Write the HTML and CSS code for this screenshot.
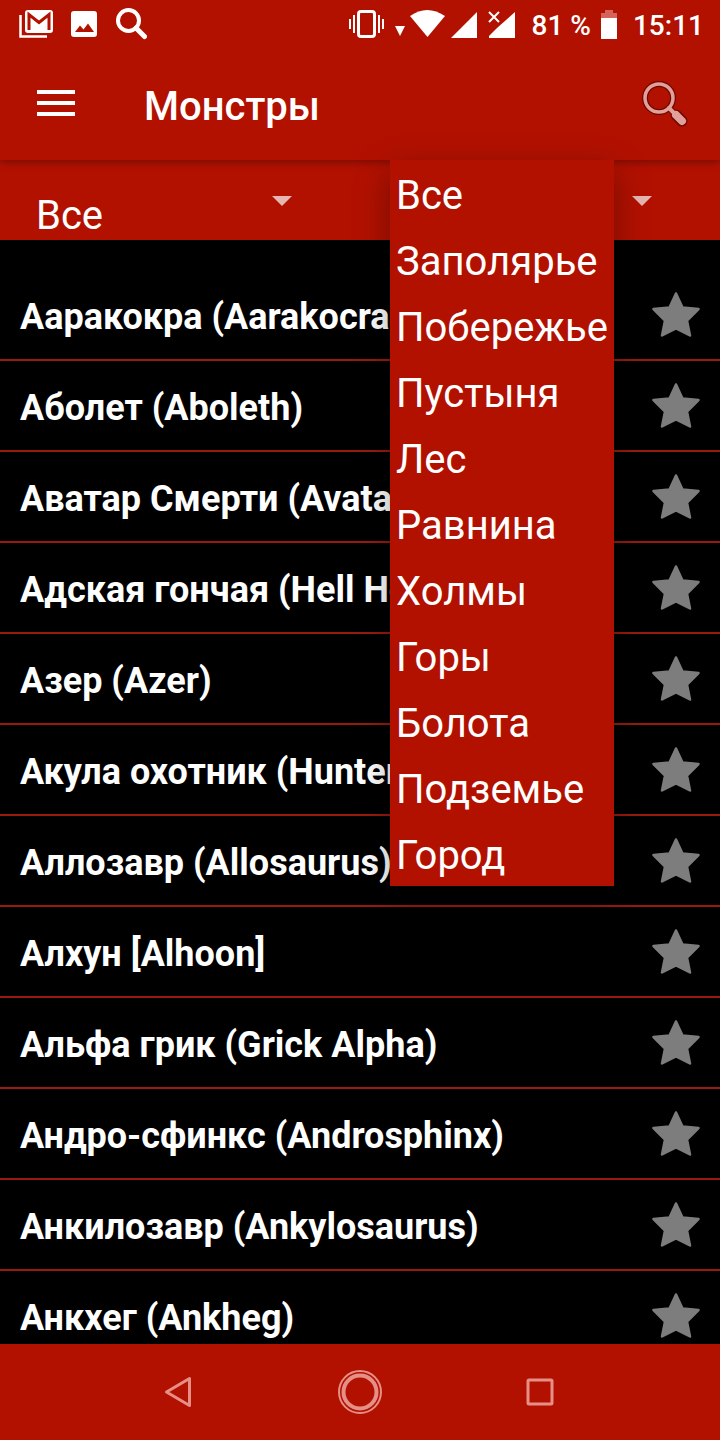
FILE: index.html
```html
<!DOCTYPE html>
<html lang="ru">
<head>
<meta charset="utf-8">
<meta name="viewport" content="width=device-width, initial-scale=1">
<title>Монстры</title>
<link rel="stylesheet" href="styles.css">
</head>
<body>
<svg class="sprite" aria-hidden="true">
  <symbol id="star" viewBox="0 0 48 46">
    <path d="M24 1.500 L30.500 15.500 L46.500 17 L35 28.500 L38 43.500 L24 36.500 L10 43.500 L13 28.500 L1.500 17 L17.500 15.500 Z" fill="#7d7d7d" stroke="#7d7d7d" stroke-width="2.500" stroke-linejoin="round"/>
  </symbol>
  <symbol id="arrow" viewBox="0 0 20 10"><path d="M0 0H20L10 10Z" fill="#e6b6b1"/></symbol>
</svg>
<div class="screen">
  <div class="status">
    <div class="status-left">
      <svg width="34" height="30" viewBox="0 0 34 30"><path d="M1.500 6V27.500H28" fill="none" stroke="#fff" stroke-width="2.500"/><rect x="6" y="1" width="28" height="23" rx="3" fill="#fff"/><path d="M10 21V5.500L20 13.500L30 5.500V21" fill="none" stroke="#b21100" stroke-width="3"/></svg>
      <svg width="26" height="26" viewBox="0 0 26 26"><rect width="26" height="26" rx="3" fill="#fff"/><path d="M4 21L9 14.500L12.500 18.500L17 12.500L23 21Z" fill="#b21100"/></svg>
      <svg width="32" height="32" viewBox="0 0 32 32"><circle cx="13.500" cy="12.500" r="10.500" fill="none" stroke="#fff" stroke-width="4"/><path d="M21 20L29.500 28.500" stroke="#fff" stroke-width="5" stroke-linecap="round"/></svg>
    </div>
    <div class="status-right">
      <svg width="168" height="32" viewBox="0 0 168 32"><g fill="none" stroke="#fff"><rect x="10.500" y="3.500" width="16" height="25" rx="2.500" stroke-width="3"/><path d="M2 11V21M6 7V25M31 7V25M35 11V21" stroke-width="2"/></g><g fill="#fff"><path d="M47 18H57L52 28Z"/><path d="M62 8Q79 -4 97 8L79.500 29Z"/><path d="M103 30L129 4V30Z"/><path d="M141 30V28L149 20L167 4V30Z"/></g><path d="M140 4L152 15M152 4L140 15" stroke="#b21100" stroke-width="5"/><path d="M141 4L151 14M151 4L141 14" stroke="#fff" stroke-width="2"/></svg>
      <span>81 %</span>
      <svg width="16" height="29" viewBox="0 0 16 29"><path d="M4 0H12V3H16V8H0V3H4Z" fill="#d4645a"/><path d="M0 8H16V29H0Z" fill="#fff"/></svg>
      <span>15:11</span>
    </div>
  </div>
  <header class="appbar">
    <button class="icon-button" aria-label="Меню"><svg width="38" height="28" viewBox="0 0 38 28"><path d="M0 2H38M0 13H38M0 24H38" stroke="#fff" stroke-width="4"/></svg></button>
    <h1>Монстры</h1>
    <button class="icon-button" aria-label="Поиск"><svg width="48" height="48" viewBox="0 0 48 48"><g stroke-linecap="round" fill="none"><g stroke="#6b0a00"><circle cx="18" cy="18" r="14" stroke-width="6"/><path d="M28 28L33 33" stroke-width="6"/><path d="M35 35L41 41" stroke-width="11"/></g><g stroke="#e3a09a"><circle cx="18" cy="18" r="14" stroke-width="3.500"/><path d="M28 28L34 34" stroke-width="4"/><path d="M35 35L41 41" stroke-width="8"/></g></g></svg></button>
  </header>
  <div class="filters">
    <div class="filter">
      <select aria-label="Тип"><option>Все</option></select>
      <svg class="filter-arrow" width="20" height="10"><use href="#arrow"/></svg>
    </div>
    <div class="filter">
      <select aria-label="Местность"><option>Все</option></select>
      <svg class="filter-arrow" width="20" height="10"><use href="#arrow"/></svg>
      <div class="menu" role="listbox" aria-label="Местность">
        <button role="option" aria-selected="true">Все</button>
        <button role="option">Заполярье</button>
        <button role="option">Побережье</button>
        <button role="option">Пустыня</button>
        <button role="option">Лес</button>
        <button role="option">Равнина</button>
        <button role="option">Холмы</button>
        <button role="option">Горы</button>
        <button role="option">Болота</button>
        <button role="option">Подземье</button>
        <button role="option">Город</button>
      </div>
    </div>
  </div>
  <ul class="list">
    <li><a href="#">Ааракокра (Aarakocra)</a><button aria-label="В избранное"><svg width="48" height="46"><use href="#star"/></svg></button></li>
    <li><a href="#">Аболет (Aboleth)</a><button aria-label="В избранное"><svg width="48" height="46"><use href="#star"/></svg></button></li>
    <li><a href="#">Аватар Смерти (Avatar of Death)</a><button aria-label="В избранное"><svg width="48" height="46"><use href="#star"/></svg></button></li>
    <li><a href="#">Адская гончая (Hell Hound)</a><button aria-label="В избранное"><svg width="48" height="46"><use href="#star"/></svg></button></li>
    <li><a href="#">Азер (Azer)</a><button aria-label="В избранное"><svg width="48" height="46"><use href="#star"/></svg></button></li>
    <li><a href="#">Акула охотник (Hunter Shark)</a><button aria-label="В избранное"><svg width="48" height="46"><use href="#star"/></svg></button></li>
    <li><a href="#">Аллозавр (Allosaurus)</a><button aria-label="В избранное"><svg width="48" height="46"><use href="#star"/></svg></button></li>
    <li><a href="#">Алхун [Alhoon]</a><button aria-label="В избранное"><svg width="48" height="46"><use href="#star"/></svg></button></li>
    <li><a href="#">Альфа грик (Grick Alpha)</a><button aria-label="В избранное"><svg width="48" height="46"><use href="#star"/></svg></button></li>
    <li><a href="#">Андро-сфинкс (Androsphinx)</a><button aria-label="В избранное"><svg width="48" height="46"><use href="#star"/></svg></button></li>
    <li><a href="#">Анкилозавр (Ankylosaurus)</a><button aria-label="В избранное"><svg width="48" height="46"><use href="#star"/></svg></button></li>
    <li><a href="#">Анкхег (Ankheg)</a><button aria-label="В избранное"><svg width="48" height="46"><use href="#star"/></svg></button></li>
  </ul>
  <nav class="navbar">
    <button aria-label="Назад"><svg width="44" height="44" viewBox="0 0 44 44"><path d="M31.500 8.500V35.500L8.500 22Z" fill="none" stroke="#e58f87" stroke-width="3" stroke-linejoin="round"/></svg></button>
    <button aria-label="Домой"><svg width="44" height="44" viewBox="0 0 44 44"><g fill="none" stroke="#e58f87"><circle cx="22" cy="22" r="21" stroke-width="2"/><circle cx="22" cy="22" r="16.500" stroke-width="4"/></g></svg></button>
    <button aria-label="Недавние"><svg width="44" height="44" viewBox="0 0 44 44"><rect x="10" y="10" width="24" height="24" rx="1" fill="none" stroke="#e58f87" stroke-width="3"/></svg></button>
  </nav>
</div>
</body>
</html>
```
FILE: styles.css
```css
* { box-sizing: border-box; }
body {
  margin: 0;
  background: #000;
  color: #fff;
  font-family: Roboto, "Noto Sans", sans-serif;
}
button {
  margin: 0;
  padding: 0;
  border: 0;
  background: none;
  color: inherit;
  font: inherit;
}
svg { display: block; flex: none; }
.sprite { position: absolute; width: 0; height: 0; }
.screen { display: flex; flex-direction: column; height: 100vh; }

.status {
  position: relative;
  z-index: 2;
  flex: none;
  display: flex;
  justify-content: space-between;
  align-items: center;
  height: 48px;
  padding: 0 16px 0 19px;
  background: #b21100;
  font-size: 28px;
  font-weight: 500;
}
.status-left { display: flex; align-items: center; gap: 18px; }
.status-right { display: flex; align-items: center; }
.status-right span { padding-top: 2px; }
.status-right span:nth-of-type(1) { margin: 0 10px 0 16px; }
.status-right span:nth-of-type(2) { margin-left: 16px; }

.appbar {
  position: relative;
  z-index: 1;
  flex: none;
  display: flex;
  align-items: center;
  height: 112px;
  padding: 0 31px 0 37px;
  background: #b21100;
  box-shadow: 0 2px 8px rgba(0, 0, 0, .35);
}
.appbar h1 {
  flex: 1;
  margin: 0;
  padding: 4px 0 0 69px;
  font-size: 40px;
  font-weight: 500;
}

.filters {
  flex: none;
  display: grid;
  grid-template-columns: 1fr 1fr;
  height: 80px;
  background: #b21100;
}
.filter { position: relative; }
.filter select {
  width: 100%;
  height: 80px;
  padding: 30px 96px 0 36px;
  border: 0;
  background: none;
  color: #fff;
  font: inherit;
  font-size: 40px;
  appearance: none;
}
.filter-arrow { position: absolute; right: 68px; top: 36px; }
.menu {
  position: absolute;
  z-index: 2;
  top: 0;
  left: 30px;
  display: flex;
  flex-direction: column;
  background: #b21100;
  box-shadow: 0 12px 32px rgba(0, 0, 0, .35);
}
.menu button {
  height: 66px;
  padding: 4px 6px 0;
  font-size: 40px;
  text-align: left;
}

.list {
  flex: 1;
  min-height: 0;
  margin: 0;
  padding: 30px 0 0;
  overflow-y: auto;
  scrollbar-width: none;
  list-style: none;
}
.list li {
  display: flex;
  justify-content: space-between;
  align-items: center;
  height: 91px;
  padding: 0 20px;
  border-bottom: 2px solid #9b1a0e;
}
.list a {
  padding-top: 4px;
  color: #fff;
  font-size: 36px;
  font-weight: 700;
  text-decoration: none;
  white-space: nowrap;
}

.navbar {
  flex: none;
  display: grid;
  grid-template-columns: repeat(3, 25%);
  justify-content: center;
  align-items: center;
  justify-items: center;
  height: 96px;
  background: #b21100;
}
```
